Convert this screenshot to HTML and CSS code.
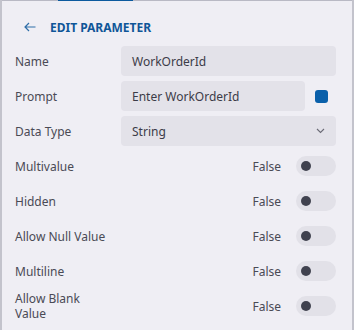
FILE: index.html
```html
<!DOCTYPE html>
<html>
<head>
    <title>Edit Parameter</title>
<link rel="stylesheet" href="styles.css">
</head>
<body>
    <div class="panel">
        <div class="tabline"><span class="tab-active"></span></div>
        <div class="header">
            <svg class="back" width="12" height="10" viewBox="0 0 12 10">
                <path d="M11.5 5H1M5 1L1 5L5 9" fill="none" stroke="#2f6ea8" stroke-width="1.2"/>
            </svg>
            <h1>EDIT PARAMETER</h1>
        </div>
        <div class="rows">
            <div class="row">
                <label>Name</label>
                <div class="field">WorkOrderId</div>
            </div>
            <div class="row">
                <label>Prompt</label>
                <div class="field">Enter WorkOrderId</div>
                <span class="color-box"></span>
            </div>
            <div class="row">
                <label>Data Type</label>
                <div class="field select">
                    String
                    <svg width="9" height="6" viewBox="0 0 9 6">
                        <path d="M1 1L4.5 4.5L8 1" fill="none" stroke="#6b6b76" stroke-width="1.1"/>
                    </svg>
                </div>
            </div>
            <div class="row">
                <label>Multivalue</label>
                <div class="switch-wrap"><span class="value">False</span><span class="switch"><span class="knob"></span></span></div>
            </div>
            <div class="row">
                <label>Hidden</label>
                <div class="switch-wrap"><span class="value">False</span><span class="switch"><span class="knob"></span></span></div>
            </div>
            <div class="row">
                <label>Allow Null Value</label>
                <div class="switch-wrap"><span class="value">False</span><span class="switch"><span class="knob"></span></span></div>
            </div>
            <div class="row">
                <label>Multiline</label>
                <div class="switch-wrap"><span class="value">False</span><span class="switch"><span class="knob"></span></span></div>
            </div>
            <div class="row">
                <label>Allow Blank Value</label>
                <div class="switch-wrap"><span class="value">False</span><span class="switch"><span class="knob"></span></span></div>
            </div>
        </div>
    </div>
</body>
</html>
```

FILE: styles.css
```css
body {
    margin: 0;
    background-color: #efeef4;
    font-family: "Noto Sans", "Open Sans", sans-serif;
    color: #4a4a55;
}

.panel {
    width: 354px;
    height: 330px;
    box-sizing: border-box;
    border-left: 2px solid #c3c3cc;
    border-right: 2px solid #c3c3cc;
    background-color: #efeef4;
}

.tabline {
    height: 1px;
    background-color: #b9b9c4;
}

.tab-active {
    display: block;
    width: 75px;
    height: 1px;
    margin-left: 56px;
    background-color: #0c5a9e;
}

.header {
    display: flex;
    align-items: center;
    height: 24px;
    padding: 14px 0 0 22px;
    margin-bottom: 7px;
}

.header .back {
    margin-right: 14px;
}

.header h1 {
    margin: 0;
    font-size: 12px;
    font-weight: bold;
    color: #0f5698;
}

.rows {
    display: flex;
    flex-direction: column;
    gap: 5px;
    padding: 0 16px 0 13px;
}

.row {
    display: flex;
    align-items: center;
    height: 30px;
}

.row label {
    width: 106px;
    box-sizing: border-box;
    flex-shrink: 0;
    padding-right: 10px;
    font-size: 12px;
    line-height: 15px;
}

.field {
    flex: 1;
    height: 30px;
    box-sizing: border-box;
    padding: 0 11px;
    display: flex;
    align-items: center;
    background-color: #e3e2e9;
    border-radius: 4px;
    font-size: 12px;
    color: #3c3c48;
}

.field.select {
    justify-content: space-between;
}

.color-box {
    width: 13px;
    height: 13px;
    margin: 0 8px 0 10px;
    border-radius: 3px;
    background-color: #0a60aa;
}

.switch-wrap {
    flex: 1;
    display: flex;
    align-items: center;
    justify-content: flex-end;
}

.value {
    font-size: 12px;
    color: #4a4a55;
    margin-right: 15px;
}

.switch {
    display: flex;
    align-items: center;
    width: 40px;
    height: 20px;
    box-sizing: border-box;
    padding-left: 5px;
    border-radius: 10px;
    background-color: #e2e1e8;
}

.knob {
    width: 10px;
    height: 10px;
    border-radius: 50%;
    background-color: #40424f;
}
```
